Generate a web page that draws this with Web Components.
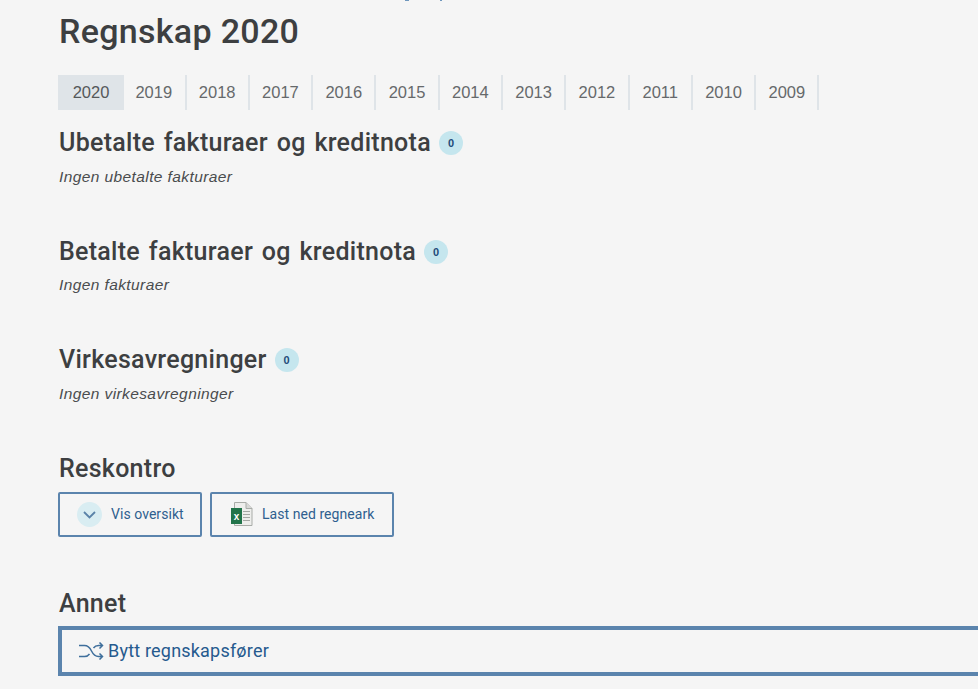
<!DOCTYPE html>
<html lang="no">
<head>
<meta charset="utf-8">
<title>Regnskap 2020</title>
<style>
    html, body { margin: 0; height: 100%; overflow: hidden; background: #f5f5f5; }
</style>
</head>
<body>
<account-page>
    <page-title>Regnskap 2020</page-title>
    <year-tabs years="2020,2019,2018,2017,2016,2015,2014,2013,2012,2011,2010,2009"></year-tabs>

    <account-section heading="Ubetalte fakturaer og kreditnota" count="0">Ingen ubetalte fakturaer</account-section>
    <account-section heading="Betalte fakturaer og kreditnota" count="0">Ingen fakturaer</account-section>
    <account-section heading="Virkesavregninger" count="0">Ingen virkesavregninger</account-section>

    <button-section heading="Reskontro">
        <outline-button width="144" pad="17">
            <svg slot="icon" width="25" height="25" viewBox="0 0 25 25">
                <circle cx="12.5" cy="12.5" r="12.5" fill="#d9edf2"/>
                <path d="M7 10l5.500 5.500L18 10" fill="none" stroke="#5a82a8" stroke-width="1.800"/>
            </svg>
            Vis oversikt
        </outline-button>
        <outline-button width="184" pad="19">
            <svg slot="icon" width="22" height="24" viewBox="0 0 22 24">
                <path d="M3.500 .5h11.500l6 6v17h-17.500z" fill="#eeeeec" stroke="#a9aca8"/>
                <path d="M15 .5v6h6" fill="#d8d8d6" stroke="#a9aca8"/>
                <path d="M12 9.500h7M12 12.500h7M12 15.500h7M12 18.500h7" stroke="#a5a8a4"/>
                <rect x="0" y="6" width="11" height="16" fill="#22744a"/>
                <text x="5.500" y="17.500" font-family="Liberation Sans" font-size="10" font-weight="700" fill="#fff" text-anchor="middle">x</text>
            </svg>
            Last ned regneark
        </outline-button>
    </button-section>

    <button-section heading="Annet">
        <wide-link>
            <svg slot="icon" width="25" height="18" viewBox="0 0 25 18">
                <path d="M0 3.500h5.500c4 0 5.500 2.500 7 5.500s3 5.500 7 5.500h4M0 14.500h5.500c2.500 0 4-1.100 5-2.500M14.500 6c1-1.400 2.500-2.500 5-2.500h4M20.500 .5l3 3-3 3M20.500 11.500l3 3-3 3" fill="none" stroke="#3f6f9c" stroke-width="1.500"/>
            </svg>
            Bytt regnskapsfører
        </wide-link>
    </button-section>
</account-page>

<script>
const HEADING_FONT = `Roboto, "Noto Sans", sans-serif`;

class AccountPage extends HTMLElement {
    constructor() {
        super();
        this.attachShadow({ mode: "open" });
        this.shadowRoot.innerHTML = `
            <style>
                :host { display: block; padding-left: 58px; height: 689px; color: #3d3f41; }
                .clip { display: flex; height: 2px; }
                .clip i { display: block; height: 1px; background: #6f97bd; }
                .clip i:first-child { width: 4px; margin-left: 347px; }
                .clip i:last-child { width: 2px; margin-left: 31px; }
            </style>
            <div class="clip"><i></i><i></i></div>
            <slot></slot>
        `;
    }
}

class PageTitle extends HTMLElement {
    constructor() {
        super();
        this.attachShadow({ mode: "open" });
        this.shadowRoot.innerHTML = `
            <style>
                :host { display: block; padding: 7px 0 0 1px; height: 65px; box-sizing: border-box;
                        font: 500 34px/44px ${HEADING_FONT}; letter-spacing: .3px; }
            </style>
            <slot></slot>
        `;
    }
}

class YearTabs extends HTMLElement {
    constructor() {
        super();
        this.attachShadow({ mode: "open" });
    }

    connectedCallback() {
        const years = this.getAttribute("years").split(",");
        this.shadowRoot.innerHTML = `
            <style>
                :host { display: flex; height: 35px; margin-top: 8px; font: 16.500px/35px "Liberation Sans", sans-serif; color: #66696b; }
                a { display: block; box-sizing: border-box; width: 63.300px; text-align: center; border-right: 2px solid #dfe4e8; }
                a:first-of-type { width: 66px; background: #dfe4e8; border-right: 0; color: #55585a; }
                a:nth-of-type(2) { width: 62.500px; padding-right: 1px; }
            </style>
            ${years.map((y) => `<a>${y}</a>`).join("")}
        `;
    }
}

class AccountSection extends HTMLElement {
    constructor() {
        super();
        this.attachShadow({ mode: "open" });
    }

    connectedCallback() {
        this.shadowRoot.innerHTML = `
            <style>
                :host { display: block; height: 108.500px; padding: 17px 0 0 1px; box-sizing: border-box; }
                h2 { display: flex; align-items: center; gap: 8px; margin: 0; height: 32px;
                     font: 500 25px/32px ${HEADING_FONT}; letter-spacing: .28px; word-spacing: 2.300px; }
                .badge { width: 24px; height: 24px; border-radius: 50%; background: #c5e6ee; color: #1f4b7a;
                         font: 700 11px/24px "Liberation Sans", sans-serif; text-align: center; letter-spacing: 0; }
                p { margin: 7.500px 0 0; font: italic 15.500px/20px "Liberation Sans", sans-serif; letter-spacing: .4px; color: #4a4c4e; }
            </style>
            <h2><span>${this.getAttribute("heading")}</span><span class="badge">${this.getAttribute("count")}</span></h2>
            <p><slot></slot></p>
        `;
    }
}

class ButtonSection extends HTMLElement {
    constructor() {
        super();
        this.attachShadow({ mode: "open" });
    }

    connectedCallback() {
        this.shadowRoot.innerHTML = `
            <style>
                :host { display: block; height: 135px; padding-top: 17px; box-sizing: border-box; }
                h2 { margin: 0 0 7px 1px; height: 32px; font: 500 25px/32px ${HEADING_FONT}; letter-spacing: .28px; }
                :host(:last-child) h2 { margin-bottom: 6px; }
                .row { display: flex; gap: 8px; }
            </style>
            <h2>${this.getAttribute("heading")}</h2>
            <div class="row"><slot></slot></div>
        `;
    }
}

class OutlineButton extends HTMLElement {
    constructor() {
        super();
        this.attachShadow({ mode: "open" });
    }

    connectedCallback() {
        this.shadowRoot.innerHTML = `
            <style>
                :host { display: flex; flex: none; align-items: center; gap: 9px; box-sizing: border-box;
                        width: ${this.getAttribute("width")}px; height: 45px; padding-left: ${this.getAttribute("pad")}px;
                        border: 2px solid #5b84ad; border-radius: 2px;
                        font: 400 14px/20px ${HEADING_FONT}; letter-spacing: .05px; color: #2f5f8f; }
            </style>
            <slot name="icon"></slot>
            <span><slot></slot></span>
        `;
    }
}

class WideLink extends HTMLElement {
    constructor() {
        super();
        this.attachShadow({ mode: "open" });
        this.shadowRoot.innerHTML = `
            <style>
                :host { display: flex; flex: 1; align-items: center; gap: 4px; box-sizing: border-box; height: 50px;
                        padding-left: 17px; border: 4px solid #5b84ad; border-right: 0;
                        font: 400 18px/24px ${HEADING_FONT}; letter-spacing: .2px; color: #255a8e; }
            </style>
            <slot name="icon"></slot>
            <span><slot></slot></span>
        `;
    }
}

customElements.define("account-page", AccountPage);
customElements.define("page-title", PageTitle);
customElements.define("year-tabs", YearTabs);
customElements.define("account-section", AccountSection);
customElements.define("button-section", ButtonSection);
customElements.define("outline-button", OutlineButton);
customElements.define("wide-link", WideLink);
</script>
</body>
</html>
